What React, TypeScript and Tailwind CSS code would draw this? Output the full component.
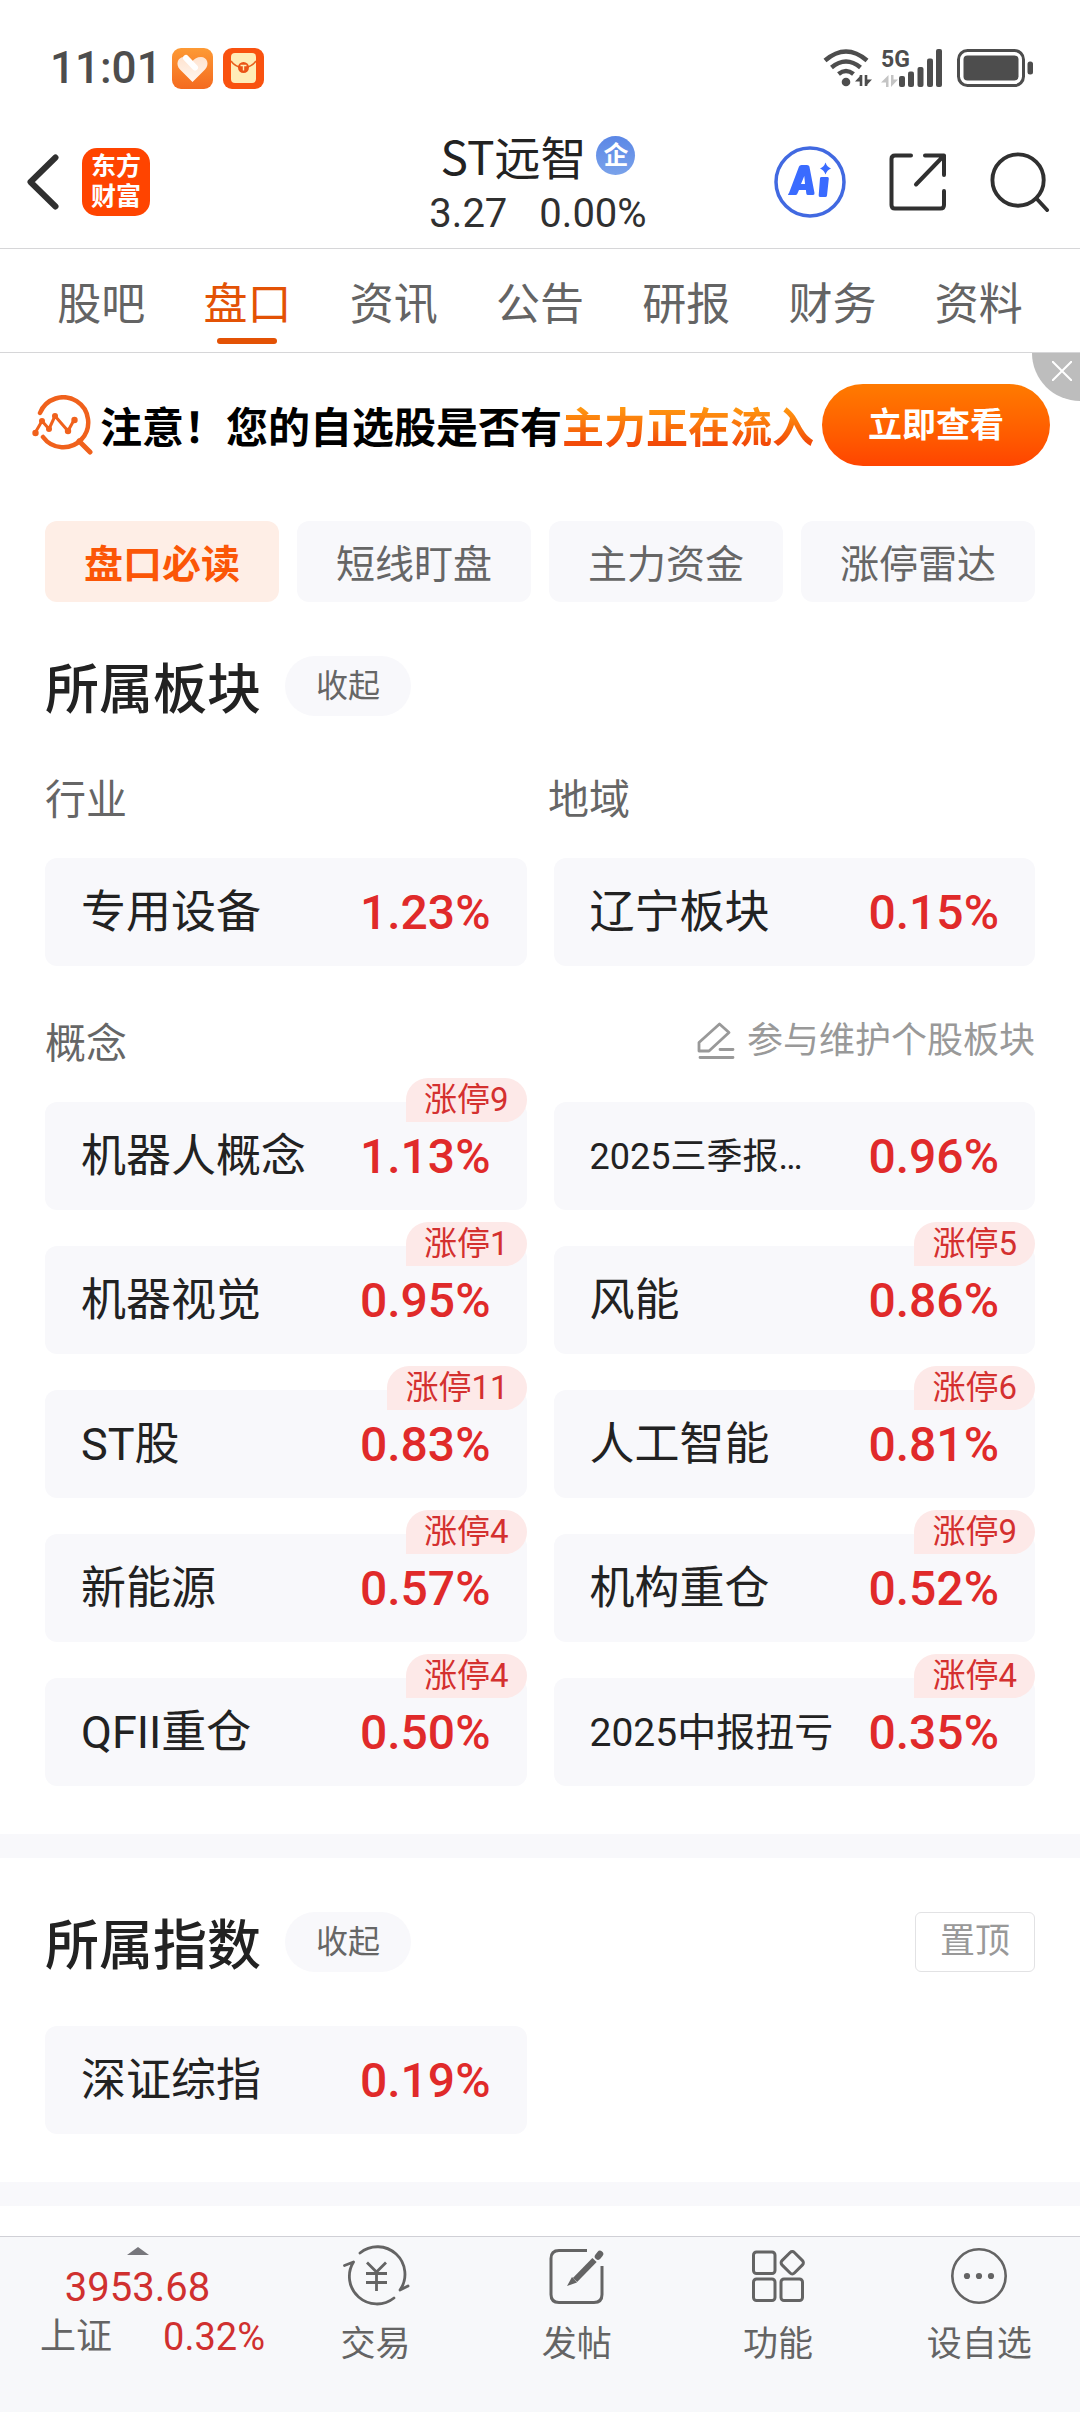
import { useState } from 'react'

type Board = {
  name: string
  pct: string
  limitUp?: number
  size?: 'md' | 'sm'
}

const TABS = ['股吧', '盘口', '资讯', '公告', '研报', '财务', '资料']
const PILLS = ['盘口必读', '短线盯盘', '主力资金', '涨停雷达']

const CONCEPTS: Board[] = [
  { name: '机器人概念', pct: '1.13%', limitUp: 9 },
  { name: '2025三季报…', pct: '0.96%', size: 'sm' },
  { name: '机器视觉', pct: '0.95%', limitUp: 1 },
  { name: '风能', pct: '0.86%', limitUp: 5 },
  { name: 'ST股', pct: '0.83%', limitUp: 11 },
  { name: '人工智能', pct: '0.81%', limitUp: 6 },
  { name: '新能源', pct: '0.57%', limitUp: 4 },
  { name: '机构重仓', pct: '0.52%', limitUp: 9 },
  { name: 'QFII重仓', pct: '0.50%', limitUp: 4 },
  { name: '2025中报扭亏', pct: '0.35%', limitUp: 4, size: 'md' },
]

function StatusBar() {
  return (
    <div className="flex h-[108px] items-center justify-between pt-7 pr-[46px] pl-[50px] text-[#4d4d4d]">
      <div className="flex items-center gap-[10px]">
        <span className="text-[44px] leading-none font-medium">11:01</span>
        <svg className="size-[41px]" viewBox="0 0 41 41">
          <defs>
            <linearGradient id="heartBg" x1="0" y1="0" x2="0" y2="1">
              <stop offset="0" stopColor="#fd9a35" />
              <stop offset="1" stopColor="#f46a1f" />
            </linearGradient>
            <linearGradient id="heartFill" x1="0" y1="0" x2="0" y2="1">
              <stop offset="0" stopColor="#ffe3cf" />
              <stop offset="1" stopColor="#fff7f0" />
            </linearGradient>
          </defs>
          <rect width="41" height="41" rx="9" fill="url(#heartBg)" />
          <path d="M20.500 34 L8 21.500 C3 16 6 9 12 9 C16 9 18.500 11 20.500 13 C22.500 11 25 9 29 9 C35 9 38 16 33 21.500 Z" fill="url(#heartFill)" />
          <path d="M14 10 L23 19.500" stroke="#fff" strokeWidth="6" strokeLinecap="round" />
        </svg>
        <svg className="size-[41px]" viewBox="0 0 41 41">
          <rect width="41" height="41" rx="9" fill="#f9520f" />
          <rect x="8" y="5" width="25" height="30" rx="4" fill="#ffedb8" />
          <path d="M8 13 Q12 19 20.500 20 Q29 19 33 13" fill="none" stroke="#e8601e" strokeWidth="1.500" />
          <circle cx="20.500" cy="19.500" r="5.500" fill="#ea5317" />
          <path d="M17.500 17.500 h6 M20.500 17.500 v5" stroke="#ffedb8" strokeWidth="1.400" />
        </svg>
      </div>

      <div className="flex items-center">
        {/* Wi-Fi */}
        <svg className="h-[38px] w-[50px]" viewBox="0 0 50 38" fill="none" stroke="currentColor">
          <path d="M2 11.500 Q23 -6.500 44 11.500" strokeWidth="4.500" />
          <path d="M8.500 18.500 Q23 6.500 37.500 18.500" strokeWidth="4.500" />
          <path d="M15.500 25 Q23 19 30.500 25" strokeWidth="4.500" />
          <circle cx="23" cy="33" r="4.300" fill="currentColor" stroke="none" />
          <path d="M38 26 V37 M43 26 V37" strokeWidth="2.600" />
          <path d="M38 26 L32 32.500 H38 Z M43 37 L49 30.500 H43 Z" fill="currentColor" stroke="none" />
        </svg>
        {/* 5G 信号 */}
        <svg className="ml-2 h-[38px] w-[62px] overflow-visible" viewBox="0 0 62 38">
          <text x="0" y="18" fontSize="23" fontWeight="700" fill="currentColor">5G</text>
          <g fill="#c4c4c4">
            <path d="M7.500 26 V38 H5 V33.500 H0 Z M10 26 H12.500 V30.500 H17 L10 38 Z" />
          </g>
          <g fill="currentColor">
            <rect x="18" y="27" width="6" height="11" rx="2" />
            <rect x="27" y="22.500" width="6" height="15.500" rx="2" />
            <rect x="36.500" y="18" width="6" height="20" rx="2" />
            <rect x="46" y="9.500" width="6" height="28.500" rx="2" />
            <rect x="55" y="0" width="6" height="38" rx="2" />
          </g>
        </svg>
        {/* 电池 */}
        <svg className="ml-[14px] h-[38px] w-[77px]" viewBox="0 0 77 38">
          <rect x="1.500" y="1.500" width="65" height="35" rx="9" fill="none" stroke="currentColor" strokeWidth="3" />
          <rect x="6.500" y="6.500" width="55" height="25" rx="4" fill="currentColor" />
          <rect x="70.500" y="12.500" width="5.500" height="13" rx="2.500" fill="currentColor" />
        </svg>
      </div>
    </div>
  )
}

function Header() {
  return (
    <header className="flex h-[141px] items-center border-b border-[#d6d6d8] pt-2 pr-[30px] pl-[26px] text-[#303030]">
      <div className="flex flex-1 items-center gap-[22px]">
        <button aria-label="返回">
          <svg className="h-[56px] w-[34px]" viewBox="0 0 34 56" fill="none" stroke="currentColor" strokeWidth="6" strokeLinecap="round" strokeLinejoin="round">
            <path d="M29.500 3.500 L4.500 28 L29.500 52.500" />
          </svg>
        </button>
        <div className="flex size-[68px] flex-col items-center justify-center rounded-[15px] bg-[#ff4400] text-[25px] leading-[30px] font-bold text-white">
          <span>东方</span>
          <span>财富</span>
        </div>
      </div>

      <div className="flex flex-col items-center pt-1">
        <div className="flex items-center gap-[10px]">
          <h1 className="font-['Noto_Sans_CJK_SC',sans-serif] text-[46px] leading-[60px] text-[#222]">ST远智</h1>
          <span className="flex size-[39px] items-center justify-center rounded-full bg-linear-to-b from-[#5b87e6] to-[#7aa2ea] text-[25px] leading-none font-bold text-white">
            企
          </span>
        </div>
        <div className="flex gap-8 text-[40px] leading-[58px]">
          <span>3.27</span>
          <span>0.00%</span>
        </div>
      </div>

      <div className="flex flex-1 items-center justify-end gap-[42px]">
        <button aria-label="AI助手">
          <svg className="size-[72px]" viewBox="0 0 72 72" fill="#3a6bff">
            <circle cx="36" cy="36" r="34" fill="none" stroke="#4169e1" strokeWidth="3.500" />
            <path fillRule="evenodd" d="M15 47 L25 20.500 Q25.600 19 27.500 19 H33 Q35 19 35.400 20.500 L40.500 47 Q40.800 49 39 49 H34 Q32.500 49 32.300 47.500 L31.900 44 H25 L23.200 48 Q22.700 49 21.500 49 H15 Q13 49 15 47 Z M27 38 H31 L30.300 30 Z" />
            <path d="M47.500 31 H53.500 Q55 31 54.800 32.800 L53 49.500 Q52.800 51 51.300 51 H46 Q44.500 51 44.700 49.200 L46 32.300 Q46.200 31 47.500 31 Z" />
            <path d="M51.500 16.500 Q53 21 57 22.500 Q53 24 51.500 28.500 Q50 24 46 22.500 Q50 21 51.500 16.500 Z" />
          </svg>
        </button>
        <button aria-label="分享">
          <svg className="size-[60px]" viewBox="0 0 60 60" fill="none" stroke="currentColor" strokeWidth="4" strokeLinecap="round" strokeLinejoin="round">
            <path d="M23 3.500 H7 Q3.500 3.500 3.500 7 V53 Q3.500 56.500 7 56.500 H52.500 Q56 56.500 56 53 V39" />
            <path d="M37 3.500 H56 V23 M56 3.500 L28 32.500" />
          </svg>
        </button>
        <button aria-label="搜索">
          <svg className="size-[60px]" viewBox="0 0 62 62" fill="none" stroke="currentColor" strokeWidth="4" strokeLinecap="round">
            <circle cx="29" cy="29" r="26.500" />
            <path d="M48 48 L59 60" />
          </svg>
        </button>
      </div>
    </header>
  )
}

function Banner() {
  return (
    <div className="relative flex h-36 items-center pr-[30px] pl-[32px]">
      <svg className="h-[60px] w-[62px] shrink-0" viewBox="0 0 62 60" fill="none" stroke="#f0611c" strokeWidth="4.500" strokeLinecap="round" strokeLinejoin="round">
        <path d="M8 18 A25 25 0 1 1 11 42" />
        <path d="M47 46 L58 57" strokeWidth="5" />
        <path d="M3 38 L10 26 L17 34 L23 21 L36 36 L42 25" strokeWidth="3" />
        <g fill="#f0611c" stroke="none">
          <circle cx="3.500" cy="38" r="3.200" />
          <circle cx="10" cy="26" r="3" />
          <circle cx="17" cy="34" r="3" />
          <circle cx="23" cy="21" r="3" />
          <circle cx="36" cy="36" r="3.200" />
          <circle cx="42.500" cy="25" r="3.200" />
        </g>
      </svg>
      <p className="ml-1.5 flex-1 font-['Noto_Sans_CJK_SC',sans-serif] text-[42px] leading-[60px] font-bold whitespace-nowrap text-black">
        注意！您的自选股是否有
        <span className="bg-linear-to-b from-[#ff9a10] from-20% to-[#f24a08] to-80% bg-clip-text text-transparent">主力正在流入</span>
      </p>
      <button className="h-[82px] w-[228px] shrink-0 rounded-full bg-linear-to-b from-[#ff7a00] to-[#ff4400] text-[34px] font-bold text-white">
        立即查看
      </button>
      <button aria-label="关闭" className="absolute top-0 right-0 flex size-12 items-center justify-center rounded-bl-full bg-[#bdbdbd]">
        <svg className="mb-3 ml-3 size-5" viewBox="0 0 20 20" stroke="#fff" strokeWidth="2">
          <path d="M0 0 L20 20 M20 0 L0 20" />
        </svg>
      </button>
    </div>
  )
}

function BoardCard({ board }: { board: Board }) {
  const nameSize = board.size === 'sm' ? 'text-[36px]' : board.size === 'md' ? 'text-[39px]' : 'text-[45px]'
  return (
    <a href="#" className="relative flex h-[108px] items-center justify-between rounded-xl bg-[#f8f8fb] px-[36px] pt-[2px]">
      <span className={`${nameSize} whitespace-nowrap text-[#222]`}>{board.name}</span>
      <span className="text-[48px] font-medium text-[#e02a2a]">{board.pct}</span>
      {board.limitUp !== undefined && (
        <span className="absolute -top-6 right-0 h-11 rounded-l-3xl rounded-r-3xl rounded-bl-none bg-[#fde9e8] px-[18px] text-[33px] leading-[44px] text-[#d4302f]">
          涨停{board.limitUp}
        </span>
      )}
    </a>
  )
}

function SectionTitle({ title }: { title: string }) {
  return (
    <div className="flex items-center gap-6">
      <h2 className="font-['Noto_Sans_CJK_SC',sans-serif] text-[54px] leading-[60px] font-medium text-[#222]">{title}</h2>
      <button className="h-[60px] w-[126px] rounded-full bg-[#f8f8fb] text-[32px] text-[#666]">收起</button>
    </div>
  )
}

function BottomBar() {
  return (
    <footer className="sticky bottom-0 flex h-[176px] border-t border-[#d0d0d6] bg-[#f7f8fa] text-[#646464]">
      <button className="flex w-[275px] flex-col items-center justify-start pt-[10px]">
        <svg className="h-2 w-[22px]" viewBox="0 0 22 8">
          <path d="M0 8 L11 0 L22 8 Z" fill="#77777c" />
        </svg>
        <span className="mt-2 text-[40px] leading-[50px] text-[#d0302f]">3953.68</span>
        <span className="flex w-full justify-between pr-[10px] pl-10 leading-[48px]">
          <span className="text-[36px]">上证</span>
          <span className="text-[38px] text-[#d0302f]">0.32%</span>
        </span>
      </button>
      <nav className="flex flex-1 font-['Noto_Sans_CJK_SC',sans-serif] text-[35px] leading-[48px]">
        <button className="flex flex-1 flex-col items-center pt-2">
          <svg className="size-[64px] overflow-visible" viewBox="0 0 64 64" fill="none" stroke="currentColor" strokeWidth="2.800" strokeLinecap="round" strokeLinejoin="round">
            <path d="M16 8 A27.500 27.500 0 0 1 56 45 L64 41" />
            <path d="M50 53 A27.500 27.500 0 0 1 9.500 17 L0.500 20.500" />
            <path d="M23 17.500 L32.500 27 L42 17.500 M32.500 27 V46 M22 28.500 H43 M22 37.500 H43" strokeLinecap="butt" />
          </svg>
          <span className="mt-2">交易</span>
        </button>
        <button className="flex flex-1 flex-col items-center pt-2">
          <svg className="size-[64px]" viewBox="0 0 64 64" fill="none" stroke="currentColor" strokeWidth="3">
            <path d="M42 5.500 H14 Q6 5.500 6 13.500 V49.500 Q6 57.500 14 57.500 H49 Q57 57.500 57 49.500 V21" />
            <path d="M49.500 15 L30 35" strokeWidth="6" />
            <path d="M27 32 L22 41 L32 37.500 Z" fill="currentColor" stroke="none" />
            <path d="M53 11.500 L55 9" strokeWidth="6.500" strokeLinecap="round" />
          </svg>
          <span className="mt-2">发帖</span>
        </button>
        <button className="flex flex-1 flex-col items-center pt-2">
          <svg className="size-[64px]" viewBox="0 0 64 64" fill="none" stroke="currentColor" strokeWidth="3">
            <rect x="7.500" y="7" width="21.500" height="21.500" rx="3" />
            <rect x="7.500" y="34" width="21.500" height="21.500" rx="3" />
            <rect x="35" y="34" width="21.500" height="21.500" rx="3" />
            <rect x="37.500" y="9" width="17.500" height="17.500" rx="3" transform="rotate(45 46.250 17.750)" />
          </svg>
          <span className="mt-2">功能</span>
        </button>
        <button className="flex flex-1 flex-col items-center pt-2">
          <svg className="size-[64px]" viewBox="0 0 64 64">
            <circle cx="32" cy="31" r="26.700" fill="none" stroke="currentColor" strokeWidth="2.600" />
            <g fill="currentColor">
              <circle cx="20" cy="31" r="3.100" />
              <circle cx="32" cy="31" r="3.100" />
              <circle cx="44" cy="31" r="3.100" />
            </g>
          </svg>
          <span className="mt-2">设自选</span>
        </button>
      </nav>
    </footer>
  )
}

export default function App() {
  const [tab, setTab] = useState('盘口')
  const [pill, setPill] = useState('盘口必读')

  return (
    <div className="flex min-h-screen flex-col bg-white font-[Roboto,'Noto_Sans_CJK_SC',sans-serif]">
      <StatusBar />
      <Header />

      {/* 顶部标签 */}
      <nav className="flex h-[104px] border-b border-[#d6d6d8] px-7 font-['Noto_Sans_CJK_SC',sans-serif]">
        {TABS.map(t => (
          <button
            key={t}
            onClick={() => setTab(t)}
            className={`relative flex-1 text-[44px] ${t === tab ? 'text-[#e35205]' : 'text-[#646464]'}`}
          >
            {t}
            {t === tab && <span className="absolute inset-x-0 bottom-2 mx-auto h-[6px] w-[60px] rounded-full bg-[#e35205]" />}
          </button>
        ))}
      </nav>

      <main className="flex-1">
        <Banner />

        <section className="px-[45px] pt-6 pb-12">
          <div className="grid grid-cols-4 gap-[18px] font-['Noto_Sans_CJK_SC',sans-serif]">
            {PILLS.map(p => (
              <button
                key={p}
                onClick={() => setPill(p)}
                className={`h-[81px] rounded-xl text-[39px] ${p === pill ? 'bg-[#feeee6] font-bold text-[#fb5607]' : 'bg-[#f8f8fb] text-[#666]'}`}
              >
                {p}
              </button>
            ))}
          </div>

          <div className="mt-[54px]">
            <SectionTitle title="所属板块" />
          </div>

          <div className="mt-[54px] grid grid-cols-2 gap-4 text-[41px] leading-[60px] text-[#666]">
            <h3>行业</h3>
            <h3>地域</h3>
          </div>
          <div className="mt-7 grid grid-cols-2 gap-[27px]">
            <BoardCard board={{ name: '专用设备', pct: '1.23%' }} />
            <BoardCard board={{ name: '辽宁板块', pct: '0.15%' }} />
          </div>

          <div className="mt-12 flex items-start justify-between">
            <h3 className="text-[41px] leading-[60px] text-[#666]">概念</h3>
            <a href="#" className="flex items-center gap-3 text-[36px] leading-[54px] text-[#999]">
              <svg className="size-[38px]" viewBox="0 0 38 38" fill="none" stroke="currentColor" strokeWidth="2.800" strokeLinecap="round" strokeLinejoin="round">
                <path d="M2 20.500 L22.500 2 L32 10.500 L12 29 H2 Z" />
                <path d="M23 27.500 H36 M3 35.500 H36" />
              </svg>
              参与维护个股板块
            </a>
          </div>
          <div className="mt-7 grid grid-cols-2 gap-x-[27px] gap-y-9">
            {CONCEPTS.map(board => (
              <BoardCard key={board.name} board={board} />
            ))}
          </div>
        </section>

        <div className="h-6 bg-[#f8f8fb]" />

        <section className="px-[45px] pt-[54px] pb-12">
          <div className="flex items-center justify-between">
            <SectionTitle title="所属指数" />
            <button className="h-[60px] w-[120px] rounded-md border border-[#e2e2e4] text-[35px] text-[#999]">置顶</button>
          </div>
          <div className="mt-[54px] grid grid-cols-2 gap-[27px]">
            <BoardCard board={{ name: '深证综指', pct: '0.19%' }} />
          </div>
        </section>

        <div className="h-6 bg-[#f8f8fb]" />
      </main>

      <BottomBar />
    </div>
  )
}
